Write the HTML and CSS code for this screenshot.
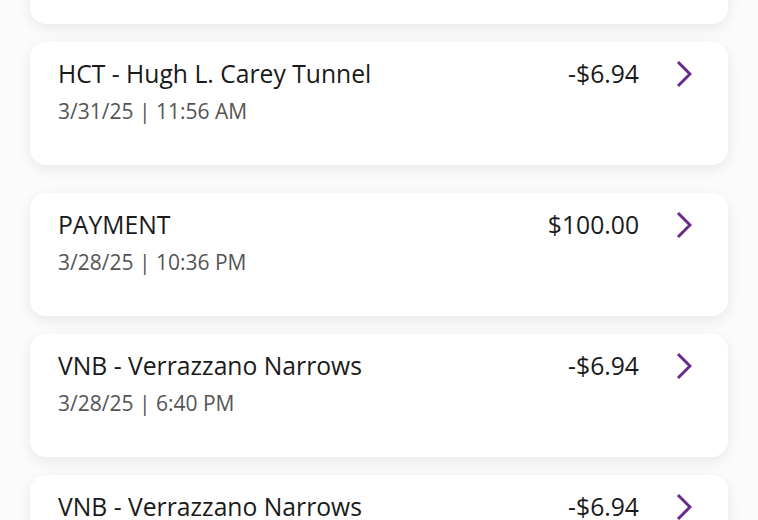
FILE: index.html
```html
<!DOCTYPE html>
<html lang="en">
<head>
  <meta charset="UTF-8">
  <meta name="viewport" content="width=device-width, initial-scale=1.0">
  <title>Transactions</title>
  <link rel="stylesheet" href="styles.css">
</head>
<body>
  <div class="list">
    <div class="card"></div>
    <div class="card">
      <div class="row">
        <span class="name">HCT - Hugh L. Carey Tunnel</span>
        <span class="amount">-$6.94</span>
        <svg class="chev" viewBox="0 0 16 28"><path d="M2 2 L14 14 L2 26"/></svg>
      </div>
      <div class="date">3/31/25 | 11:56 AM</div>
    </div>
    <div class="card payment">
      <div class="row">
        <span class="name">PAYMENT</span>
        <span class="amount">$100.00</span>
        <svg class="chev" viewBox="0 0 16 28"><path d="M2 2 L14 14 L2 26"/></svg>
      </div>
      <div class="date">3/28/25 | 10:36 PM</div>
    </div>
    <div class="card">
      <div class="row">
        <span class="name">VNB - Verrazzano Narrows</span>
        <span class="amount">-$6.94</span>
        <svg class="chev" viewBox="0 0 16 28"><path d="M2 2 L14 14 L2 26"/></svg>
      </div>
      <div class="date">3/28/25 | 6:40 PM</div>
    </div>
    <div class="card">
      <div class="row">
        <span class="name">VNB - Verrazzano Narrows</span>
        <span class="amount">-$6.94</span>
        <svg class="chev" viewBox="0 0 16 28"><path d="M2 2 L14 14 L2 26"/></svg>
      </div>
    </div>
  </div>
</body>
</html>
```

FILE: styles.css
```css
body { margin: 0; background: #fbfbfb; font-family: "Open Sans", "Noto Sans", sans-serif; overflow: hidden; }
.list { display: flex; flex-direction: column; gap: 18px; padding: 0 30px; margin-top: -99px; }
.card { background: #fff; border-radius: 16px; height: 123px; box-sizing: border-box; padding: 16px 28px 0 28px; box-shadow: 0 4px 14px rgba(0,0,0,0.08); }
.card.payment { margin-top: 10px; }
.row { display: flex; align-items: center; height: 32px; }
.name { flex: 1; font-size: 24.7px; line-height: 32px; color: #1a1a1a; }
.amount { font-size: 24.7px; line-height: 32px; color: #1a1a1a; }
.chev { width: 16px; height: 28px; margin-left: 37px; margin-right: 8px; }
.chev path { fill: none; stroke: #6a2a8c; stroke-width: 3; }
.date { margin-top: 7px; font-size: 21px; line-height: 28px; color: #555; }
```
